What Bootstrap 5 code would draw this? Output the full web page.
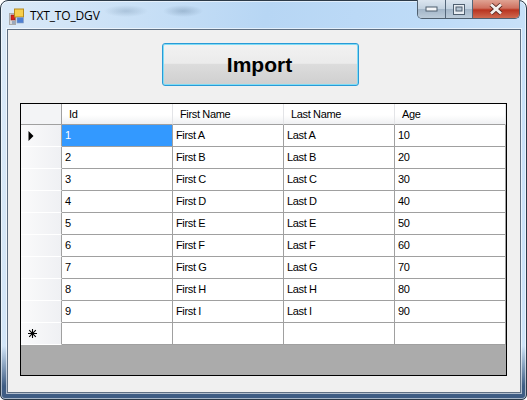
<!DOCTYPE html>
<html lang="en">
<head>
<meta charset="utf-8">
<title>TXT_TO_DGV</title>
<link rel="stylesheet" href="https://cdn.jsdelivr.net/npm/bootstrap@5.3.0/dist/css/bootstrap.min.css">
<style>
html,body{margin:0;height:400px;overflow:hidden;background:#fff}
.win-frame{width:527px;height:400px;border:1px solid #2c3a48;border-radius:8px 8px 5px 5px;padding:0 5px 6px 6px;box-shadow:inset 0 0 0 1px rgba(255,255,255,.55);
 background:
 linear-gradient(rgba(63,93,132,0) 345px,rgba(63,93,132,1) 385px),
 radial-gradient(ellipse 22px 6px at 125px 10px,rgba(90,120,150,.28),transparent),
 radial-gradient(ellipse 20px 6px at 182px 10px,rgba(80,110,140,.32),transparent),
 linear-gradient(100deg,#dbeaf8 0,#b7d6f4 45%,#bfdcf8 75%,#cfe4f8 100%)}
.title-row{height:28px;align-items:flex-start}
.app-ico{margin:7px 4px 0 2px;flex:none}
.title-text{font:12px/1 "Open Sans","Noto Sans",sans-serif;color:#000;margin-top:9px;letter-spacing:-.15px}
.caps{margin-left:auto;height:19px;margin-right:1px;border:1px solid #50606f;border-top:0;border-radius:0 0 5px 5px;overflow:hidden;margin-top:-1px}
.cap-btn{height:100%;display:flex;align-items:center;justify-content:center;background:linear-gradient(#dbe5ef 0,#c3d2e0 48%,#a3b6c8 52%,#bccbd9 100%);border-right:1px solid #55677a}
.cap-min{width:28px}
.cap-max{width:27px}
.cap-close{width:46px;border-right:0;background:linear-gradient(#e0a393 0,#cf7160 45%,#b93420 55%,#cf6a50 100%)}
.client-area{height:364px;border:1px solid #5f6f82;box-shadow:0 0 0 1px rgba(255,255,255,.6);background:#f0f0f0;padding:13px 13px 0 12px}
.import-btn{display:block;width:197px;height:43px;margin:0 0 17px 142px;padding:0 2px 0 0;border:1px solid #2a9ad6;border-radius:3px;font:700 21px/1 "Liberation Sans",Arial,sans-serif;color:#000;
 background:linear-gradient(#f2f2f2 0,#ebebeb 47%,#dcdcdc 50%,#cfcfcf 100%);box-shadow:inset 0 0 0 1px #7fdcf5}
.import-btn:hover{color:#000;border-color:#2a9ad6}
.grid-box{width:487px;height:273px;border:1px solid #000;background:#ababab}
.dgv{table-layout:fixed;width:485px;border-collapse:separate;border-spacing:0;font:11px/1 "Liberation Sans",Arial,sans-serif;letter-spacing:-.35px;color:#000;margin:0}
.dgv th,.dgv td{padding:0 0 0 3px;overflow:hidden;white-space:nowrap;vertical-align:middle}
.dgv td{height:22px;background:#fff;border-right:1px solid #a0a0a0;border-bottom:1px solid #a0a0a0}
.dgv thead th{height:21px;font-weight:400;padding-left:7px;background:linear-gradient(#fff 0,#fff 55%,#eff0f2 100%);border-right:1px solid #e3e4e7;border-bottom:1px solid #a0a0a0}
.dgv th.corner{background:#f3f4f6;padding:0;border-right:1px solid #a0a0a0}
.dgv th.row-head{padding:0 0 0 7px;background:linear-gradient(90deg,#fafafb 0,#eff0f3 100%);border-right:1px solid #a0a0a0;border-bottom:1px solid #fff;font-weight:400}
.dgv svg{display:block}
.dgv td.cell-sel{background:#3399ff;color:#fff}
.col-head{width:41px}
.col-data{width:111px}
</style>
</head>
<body>
<div class="win-frame">
  <div class="title-row d-flex">
    <svg class="app-ico" width="17" height="17" viewBox="0 0 17 17">
      <rect x="0.5" y="5.5" width="6" height="11" fill="#d9d9d9" stroke="#a9a9a9"/>
      <rect x="2" y="7" width="4" height="5" fill="#d8241c" stroke="#8e1a14" stroke-width=".6"/>
      <rect x="5.5" y="1" width="9" height="8" fill="#f7cf4c" stroke="#b68a1e"/>
      <rect x="8" y="9.5" width="6.5" height="5.5" fill="#4f80d2" stroke="#8aa0c0" stroke-width=".6"/>
      <rect x="3" y="13" width="3" height="3" fill="#9aa8bc"/>
    </svg>
    <span class="title-text">TXT_TO_DGV</span>
    <div class="caps d-flex">
      <div class="cap-btn cap-min"><svg width="14" height="6" viewBox="0 0 14 6"><rect x="1" y="1" width="11" height="4" fill="#f4f6f8" stroke="#4f5f6f"/></svg></div>
      <div class="cap-btn cap-max"><svg width="12" height="11" viewBox="0 0 12 11"><rect x=".5" y=".5" width="11" height="10" fill="#e8edf2" stroke="#4f5f6f"/><rect x="3" y="3" width="6" height="4" fill="#b4c3d1" stroke="#4f5f6f"/></svg></div>
      <div class="cap-btn cap-close"><svg width="16" height="12" viewBox="0 0 16 12"><path d="M3 1.5 L13 10.5 M13 1.5 L3 10.5" stroke="#5a2a22" stroke-width="4.4"/><path d="M3 1.5 L13 10.5 M13 1.5 L3 10.5" stroke="#f3f0ee" stroke-width="2.8"/></svg></div>
    </div>
  </div>
  <div class="client-area">
    <button type="button" class="btn import-btn">Import</button>
    <div class="grid-box">
      <table class="dgv">
        <colgroup><col class="col-head"><col class="col-data"><col class="col-data"><col class="col-data"><col class="col-data"></colgroup>
        <thead>
          <tr><th class="corner"></th><th>Id</th><th>First Name</th><th>Last Name</th><th>Age</th></tr>
        </thead>
        <tbody>
          <tr><th class="row-head"><svg width="6" height="10" viewBox="0 0 6 10"><polygon points="0.5,0 5.5,5 0.5,10" fill="#000"/></svg></th><td class="cell-sel">1</td><td>First A</td><td>Last A</td><td>10</td></tr>
          <tr><th class="row-head"></th><td>2</td><td>First B</td><td>Last B</td><td>20</td></tr>
          <tr><th class="row-head"></th><td>3</td><td>First C</td><td>Last C</td><td>30</td></tr>
          <tr><th class="row-head"></th><td>4</td><td>First D</td><td>Last D</td><td>40</td></tr>
          <tr><th class="row-head"></th><td>5</td><td>First E</td><td>Last E</td><td>50</td></tr>
          <tr><th class="row-head"></th><td>6</td><td>First F</td><td>Last F</td><td>60</td></tr>
          <tr><th class="row-head"></th><td>7</td><td>First G</td><td>Last G</td><td>70</td></tr>
          <tr><th class="row-head"></th><td>8</td><td>First H</td><td>Last H</td><td>80</td></tr>
          <tr><th class="row-head"></th><td>9</td><td>First I</td><td>Last I</td><td>90</td></tr>
          <tr><th class="row-head"><svg width="9" height="9" viewBox="0 0 9 9"><path d="M4.5 0V9M0 4.5H9M1.2 1.2L7.8 7.8M7.8 1.2L1.2 7.8" stroke="#000" stroke-width="1.1"/></svg></th><td></td><td></td><td></td><td></td></tr>
        </tbody>
      </table>
    </div>
  </div>
</div>
<script src="https://cdn.jsdelivr.net/npm/bootstrap@5.3.0/dist/js/bootstrap.bundle.min.js"></script>
</body>
</html>
